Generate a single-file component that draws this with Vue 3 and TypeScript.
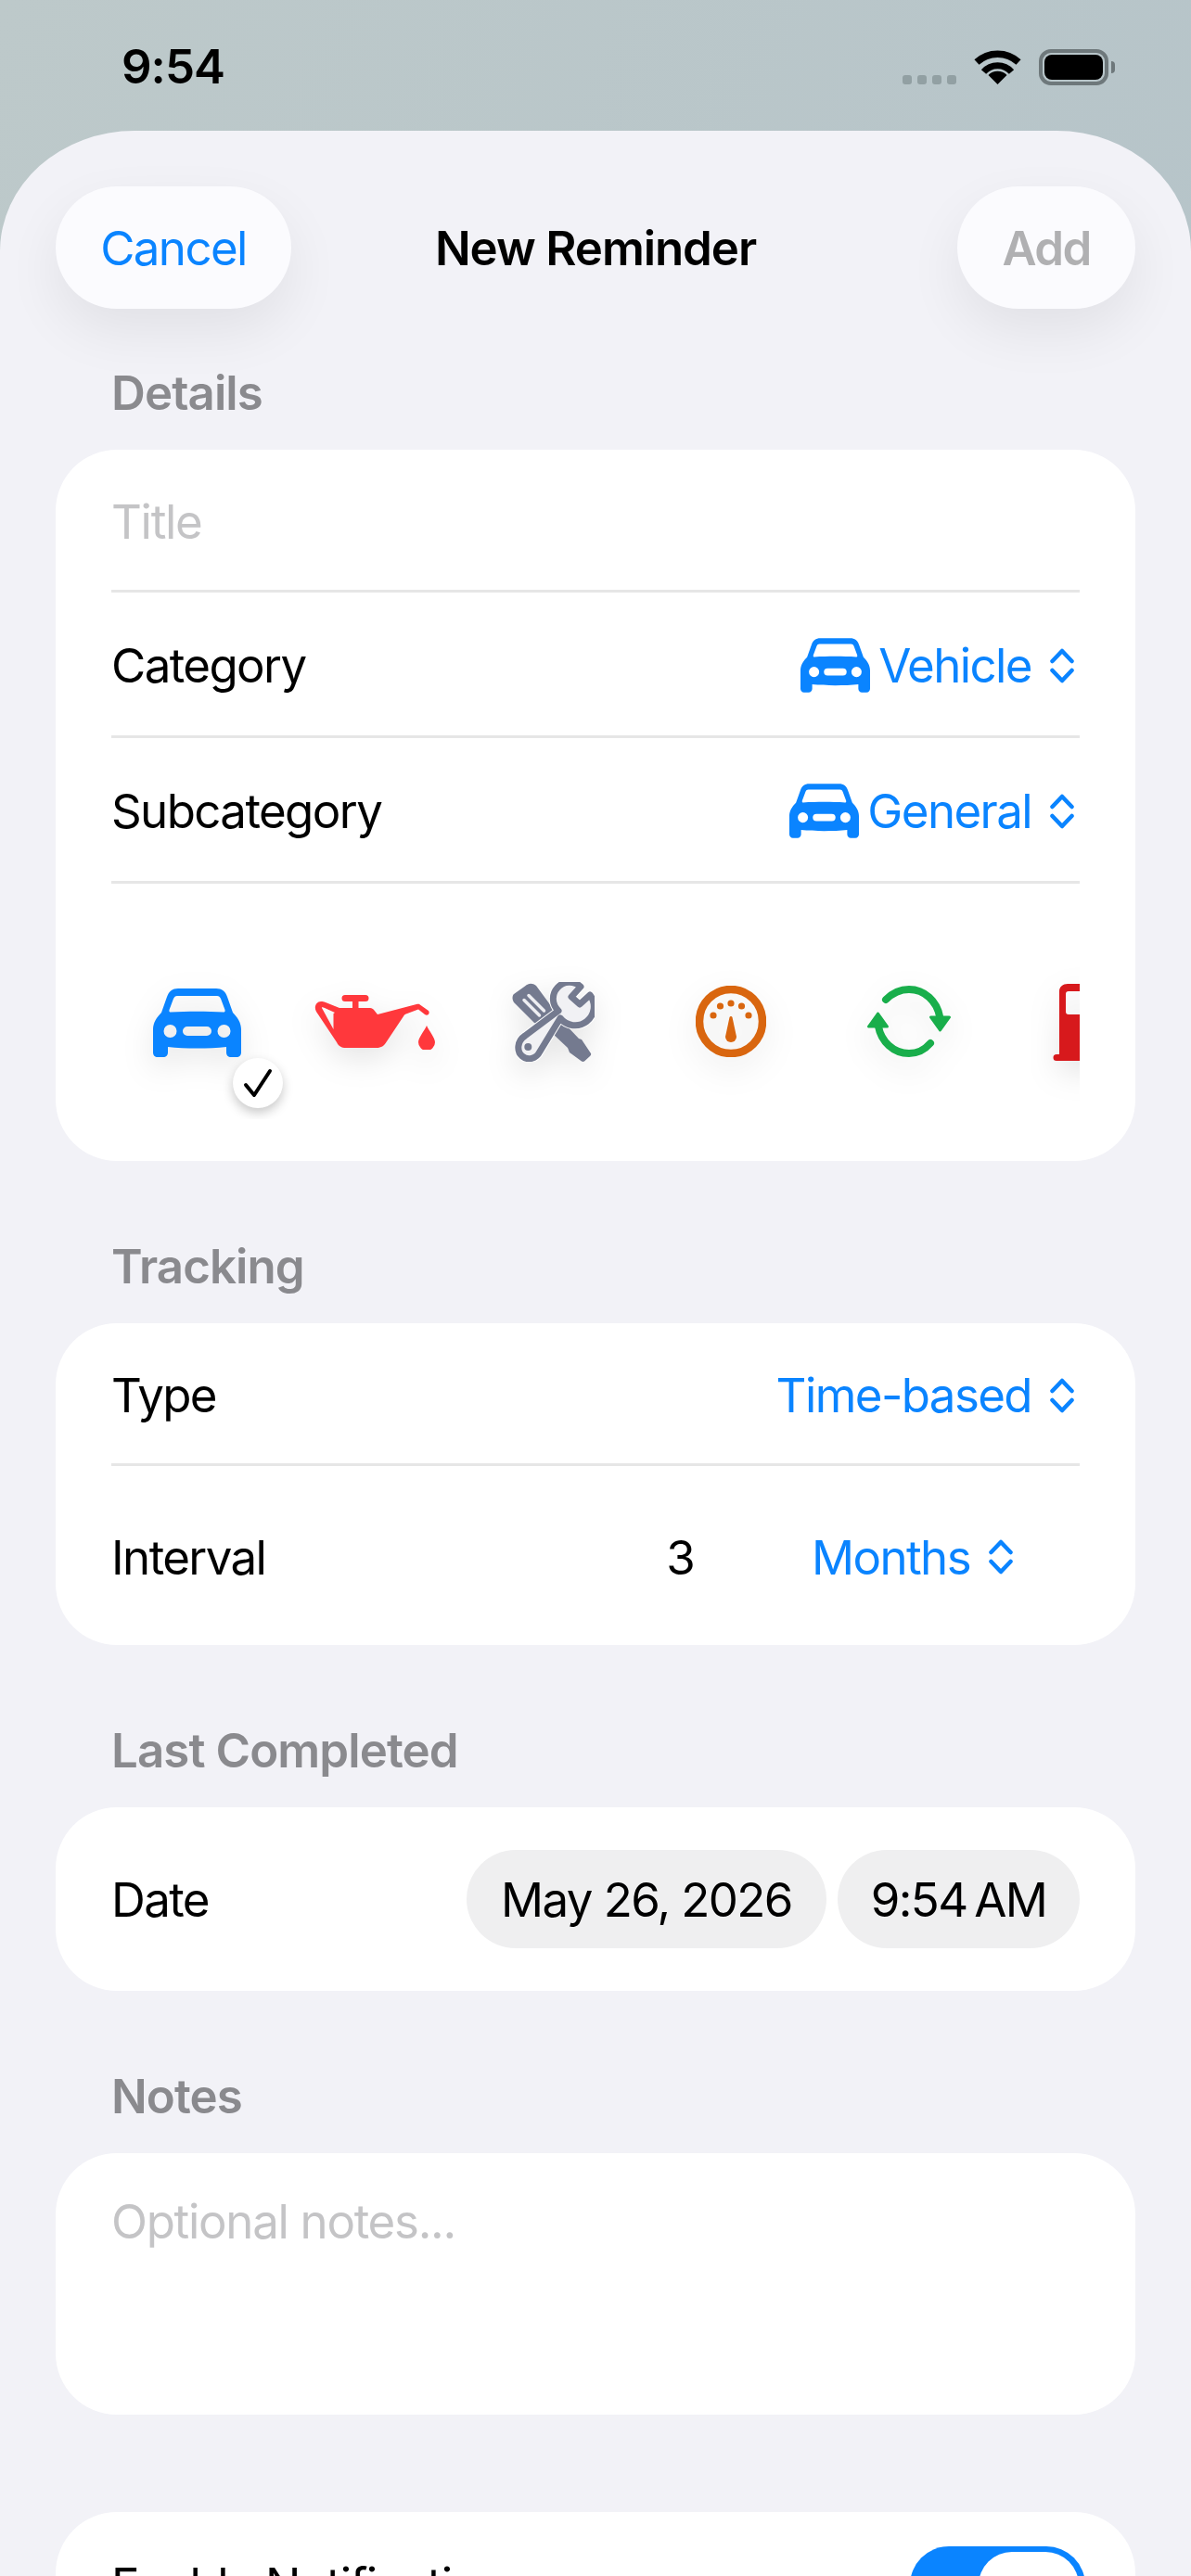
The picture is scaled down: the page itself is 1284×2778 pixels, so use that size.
<script setup lang="ts">
const iconCar = "M27 0H68C74 0 78 3 80 9L86 26C91 31 95 37 95 44V69C95 72 93 74 90 74H84C81 74 79 72 79 69V63C60 65 35 65 16 63V69C16 72 14 74 11 74H5C2 74 0 72 0 69V44C0 37 4 31 9 26L15 9C17 3 21 0 27 0ZM26 8C24 8 23 9 22 11L17.5 23C17 25 18 25.5 19 25.5C37 24.5 58 24.5 76 25.5C77 25.5 78 25 77.5 23L73 11C72 9 71 8 69 8ZM18.5 39A7 7 0 1 0 18.5 53A7 7 0 1 0 18.5 39ZM76.5 39A7 7 0 1 0 76.5 53A7 7 0 1 0 76.5 39ZM37 41A5 5 0 0 0 37 51H58A5 5 0 0 0 58 41Z"
const wrench = "M74 5A17.5 17.5 0 0 0 50 31L14 58C5 64 5 75 11 80C17 85 26 83 30 75L52 39A17.5 17.5 0 0 0 84 14L73 24L64 16Z"
</script>

<template>
  <div class="phone">
    <header class="status">
      <span class="clock">9:54</span>
      <div class="status-icons">
        <div class="signal"><i></i><i></i><i></i><i></i></div>
        <svg class="wifi" viewBox="0 0 51 37">
          <path d="M3 13A33 33 0 0 1 48 13" fill="none" stroke="#000" stroke-width="7.5" />
          <path d="M10.5 23.5A20 20 0 0 1 40.5 23.5" fill="none" stroke="#000" stroke-width="7" />
          <path d="M25.5 37L15.5 27A14 14 0 0 1 35.5 27Z" fill="#000" />
        </svg>
        <div class="battery"><div class="battery-level"></div></div>
        <div class="battery-cap"></div>
      </div>
    </header>

    <main class="sheet">
      <nav class="nav">
        <div class="nav-side"><button class="pill pill-cancel">Cancel</button></div>
        <h1 class="nav-title">New Reminder</h1>
        <div class="nav-side nav-side-end"><button class="pill pill-add">Add</button></div>
      </nav>

      <section class="section section-first">
        <h2 class="section-label">Details</h2>
        <div class="card card-details">
          <div class="row row-short"><span class="placeholder">Title</span></div>
          <div class="divider"></div>
          <div class="row">
            <span>Category</span>
            <div class="picker">
              <svg class="car-small" viewBox="0 0 95 74"><path :d="iconCar" fill="#0a84ff" fill-rule="evenodd" /></svg>
              <span>Vehicle</span>
              <svg class="chevrons" viewBox="0 0 26 38"><path d="M2.5 14L13 3L23.5 14M2.5 24L13 35L23.5 24" /></svg>
            </div>
          </div>
          <div class="divider"></div>
          <div class="row">
            <span>Subcategory</span>
            <div class="picker">
              <svg class="car-small" viewBox="0 0 95 74"><path :d="iconCar" fill="#0a84ff" fill-rule="evenodd" /></svg>
              <span>General</span>
              <svg class="chevrons" viewBox="0 0 26 38"><path d="M2.5 14L13 3L23.5 14M2.5 24L13 35L23.5 24" /></svg>
            </div>
          </div>
          <div class="divider"></div>
          <div class="strip">
            <div class="cell">
              <svg class="icon icon-car" viewBox="0 0 95 74"><path :d="iconCar" fill="#0a84ff" fill-rule="evenodd" /></svg>
              <div class="check">
                <svg viewBox="0 0 32 32"><path d="M3 18L12 29L29 3" fill="none" stroke="#000" stroke-width="4" stroke-linecap="round" stroke-linejoin="round" /></svg>
              </div>
            </div>
            <div class="cell">
              <svg class="icon icon-oil" viewBox="0 0 130 60">
                <path fill="#ff383c" fill-rule="evenodd" d="M7 8C9 8 10 8 12 9L27 15H41V8H33A3.5 3.5 0 0 1 33 1H55A3.5 3.5 0 0 1 55 8H47.5V15H60C62 15 63 16 64 17L68 22L110 11C112 10.5 113 10.5 114.5 12L123 18C125 21 122 24 119 22L112 16.5L100 21C98 21.5 97 22 96 24L78 51C75 56 72 58 67 58H34C29 58 26 56 24 52L2 19C-1 14 2 8 7 8ZM8 15L20.5 38V21L22 20L11 15C9 14 7.5 14 8 15Z" />
                <path fill="#ff383c" d="M121 34C123 39 130 47 130 52A8.7 8.7 0 0 1 112 52C112 47 119 39 121 34Z" />
              </svg>
            </div>
            <div class="cell">
              <svg class="icon icon-tools" viewBox="0 0 89 86">
                <path fill="#747a8f" d="M14 4.5C18 1 22 1 26 4L54 42L72 61L75 62L85 77C85.500 78 85 79 84 80L78 85.500C77 86 76 86 75 85.500L62 76L60 71L42 54L24 44L2 22C0 19 0 15 2 13Z" />
                <path d="M13 19.500L29.500 36M18 14.500L34.500 31" stroke="#eeeef2" stroke-width="3.500" stroke-linecap="round" fill="none" />
                <path :d="wrench" fill="#f1f1f4" stroke="#fff" stroke-width="9" stroke-linejoin="round" />
                <path :d="wrench" fill="#f1f1f4" stroke="#747a8f" stroke-width="7" stroke-linejoin="round" />
                <circle cx="17.300" cy="70" r="4" fill="#747a8f" />
              </svg>
            </div>
            <div class="cell">
              <svg class="icon icon-gauge" viewBox="0 0 76 77">
                <ellipse cx="38" cy="38.5" rx="34" ry="34.5" fill="none" stroke="#d9660f" stroke-width="8.5" />
                <g fill="#d9660f">
                  <circle cx="19" cy="32" r="3.6" /><circle cx="26.5" cy="22" r="3.6" /><circle cx="38" cy="19" r="3.6" />
                  <circle cx="49.5" cy="22" r="3.6" /><circle cx="57" cy="32" r="3.6" />
                  <path d="M36.5 34C37 32.5 39 32.5 39.5 34L44 55A6 6 0 1 1 32 55Z" />
                </g>
              </svg>
            </div>
            <div class="cell">
              <svg class="icon icon-sync" viewBox="0 0 90 77">
                <g fill="none" stroke="#19ae4b" stroke-width="8" stroke-linecap="round">
                  <path d="M20 15C28 7 36 4 45 4C62 4 75 17 78 33" />
                  <path d="M68 62C62 69 54 73 45 73C28 73 15 60 12 44" />
                </g>
                <g fill="#19ae4b" stroke="#19ae4b" stroke-width="3" stroke-linejoin="round">
                  <path d="M68.5 34H88.5L78.5 48Z" />
                  <path d="M1.5 44H21.5L11.5 30Z" />
                </g>
              </svg>
            </div>
            <div class="cell">
              <svg class="icon icon-fuel" viewBox="0 0 75 84">
                <path fill="#d7191c" fill-rule="evenodd" d="M16 0H50C55 0 58 3 58 8V76H61A3.5 3.5 0 0 1 61 83H4A3.5 3.5 0 0 1 4 76H7V8C7 3 11 0 16 0ZM17 8C15 8 14 9 14 11V30C14 32 15 33 17 33H48C50 33 51 32 51 30V11C51 9 50 8 48 8Z" />
              </svg>
            </div>
          </div>
        </div>
      </section>

      <section class="section">
        <h2 class="section-label">Tracking</h2>
        <div class="card">
          <div class="row row-short">
            <span>Type</span>
            <div class="picker">
              <span>Time-based</span>
              <svg class="chevrons" viewBox="0 0 26 38"><path d="M2.5 14L13 3L23.5 14M2.5 24L13 35L23.5 24" /></svg>
            </div>
          </div>
          <div class="divider"></div>
          <div class="row row-tall">
            <span class="grow">Interval</span>
            <span>3</span>
            <div class="picker picker-inset">
              <span>Months</span>
              <svg class="chevrons" viewBox="0 0 26 38"><path d="M2.5 14L13 3L23.5 14M2.5 24L13 35L23.5 24" /></svg>
            </div>
          </div>
        </div>
      </section>

      <section class="section">
        <h2 class="section-label">Last Completed</h2>
        <div class="card">
          <div class="row row-date">
            <span class="grow">Date</span>
            <span class="date-pill date-day">May 26, 2026</span>
            <span class="date-pill date-time">9:54 AM</span>
          </div>
        </div>
      </section>

      <section class="section">
        <h2 class="section-label">Notes</h2>
        <div class="card card-notes"><span class="placeholder">Optional notes...</span></div>
      </section>

      <section class="section section-last">
        <div class="card">
          <div class="row">
            <span>Enable Notifications</span>
            <div class="toggle"><div class="thumb"></div></div>
          </div>
        </div>
      </section>
    </main>
  </div>
</template>

<style>
html, body { margin: 0; background: #b8c5c9; overflow: hidden; }
</style>

<style scoped>
.phone {
  width: 1284px;
  height: 2778px;
  overflow: hidden;
  background: linear-gradient(115deg, #bdc9ca 0%, #b6c4c9 60%);
  font-family: Inter, "Liberation Sans", sans-serif;
  font-size: 51px;
  letter-spacing: -1.6px;
  color: #000;
}
.status {
  height: 141px;
  box-sizing: border-box;
  display: flex;
  justify-content: space-between;
  align-items: flex-start;
  padding: 42px 82px 0 133px;
}
.clock { font-size: 51px; line-height: 60px; font-weight: 600; letter-spacing: -1px; margin-left: -2px; }
.status-icons { display: flex; align-items: flex-start; padding-top: 11px; }
.signal { display: flex; gap: 6px; margin-top: 28px; margin-right: 19px; }
.signal i { width: 10px; height: 10px; border-radius: 3px; background: #92a0a3; }
.wifi { width: 51px; height: 37px; margin-top: 1px; margin-right: 19px; }
.battery {
  width: 75px; height: 39px; box-sizing: border-box;
  border: 4px solid #6e787b; border-radius: 13px; padding: 2px;
}
.battery-level { height: 100%; background: #000; border-radius: 8px; }
.battery-cap { width: 4px; height: 13px; background: #6e787b; border-radius: 0 4px 4px 0; margin: 13px 0 0 3px; }

.sheet {
  height: 2637px;
  box-sizing: border-box;
  padding: 60px 60px 0;
  background: #f2f2f7;
  border-radius: 145px 145px 0 0 / 130px 130px 0 0;
}
.nav { display: flex; align-items: center; height: 132px; }
.nav-side { flex: 1; display: flex; }
.nav-side-end { justify-content: flex-end; }
.pill {
  height: 132px; border: 0; border-radius: 66px; background: #fbfbfe;
  font: inherit; letter-spacing: inherit;
  box-shadow: 0 24px 60px rgba(0, 0, 0, 0.07);
  padding: 0;
}
.pill-cancel { width: 254px; color: #0a84ff; }
.pill-add { width: 192px; color: #b0b0b2; font-weight: 600; }
.nav-title { margin: 0; font-size: 51px; font-weight: 600; letter-spacing: -1.1px; }

.section { margin-top: 84px; }
.section-first { margin-top: 61px; }
.section-last { margin-top: 105px; }
.section-label {
  margin: 0 0 31px 60px;
  font-size: 51px; line-height: 60px; font-weight: 600;
  color: #8a8a8e; letter-spacing: -0.9px;
}
.card { background: #fff; border-radius: 66px; padding: 0 60px; }
.card-details { padding-bottom: 45px; }
.row { display: flex; justify-content: space-between; align-items: center; min-height: 154px; box-sizing: border-box; padding-top: 3px; }
.row-short { min-height: 151px; padding-top: 4px; }
.row-tall { min-height: 193px; }
.row-date { min-height: 198px; padding-top: 0; }
.grow { flex: 1; }
.divider { height: 3px; background: #e6e6e6; }
.placeholder { color: #c4c4c6; letter-spacing: -1.3px; }
.picker { display: flex; align-items: center; color: #0a84ff; }
.picker-inset { margin-right: 66px; margin-left: 127px; }
.car-small { width: 75px; height: 59px; margin-right: 9px; }
.chevrons { width: 26px; height: 38px; margin-left: 20px; margin-right: 6px; fill: none; stroke: #0a84ff; stroke-width: 4.5; stroke-linecap: round; stroke-linejoin: round; }

.date-pill { height: 106px; display: flex; align-items: center; justify-content: center; background: #efeff0; border-radius: 53px; }
.date-day { width: 388px; margin-right: 12px; }
.date-time { width: 261px; word-spacing: -5px; }

.strip { display: flex; height: 254px; gap: 12px; overflow: hidden; padding-left: 2px; }
.cell { flex: 0 0 180px; position: relative; display: flex; justify-content: center; padding-top: 106px; box-sizing: border-box; }
.icon { filter: drop-shadow(0 12px 16px rgba(0, 0, 0, 0.1)); flex: none; }
.icon-car { width: 95px; height: 74px; margin-top: 7px; }
.icon-oil { width: 130px; height: 60px; margin-top: 13px; }
.icon-tools { width: 89px; height: 86px; }
.icon-gauge { width: 76px; height: 77px; margin-top: 4px; }
.icon-sync { width: 90px; height: 77px; margin-top: 4px; }
.icon-fuel { width: 75px; height: 84px; margin-top: 2px; }
.check {
  position: absolute; left: 129px; top: 188px;
  width: 54px; height: 54px; border-radius: 50%; background: #fff;
  box-shadow: 0 5px 12px rgba(0, 0, 0, 0.22);
  display: flex; align-items: center; justify-content: center;
}
.check svg { width: 32px; height: 32px; }
.card-notes { height: 282px; box-sizing: border-box; line-height: 62px; padding-top: 43px; }
.section-last .card { padding-right: 54px; }
.toggle { width: 189px; height: 84px; border-radius: 42px; background: #0a84ff; box-sizing: border-box; padding: 6px 7px; display: flex; justify-content: flex-end; }
.thumb { width: 108px; height: 72px; border-radius: 36px; background: #fff; }
</style>
